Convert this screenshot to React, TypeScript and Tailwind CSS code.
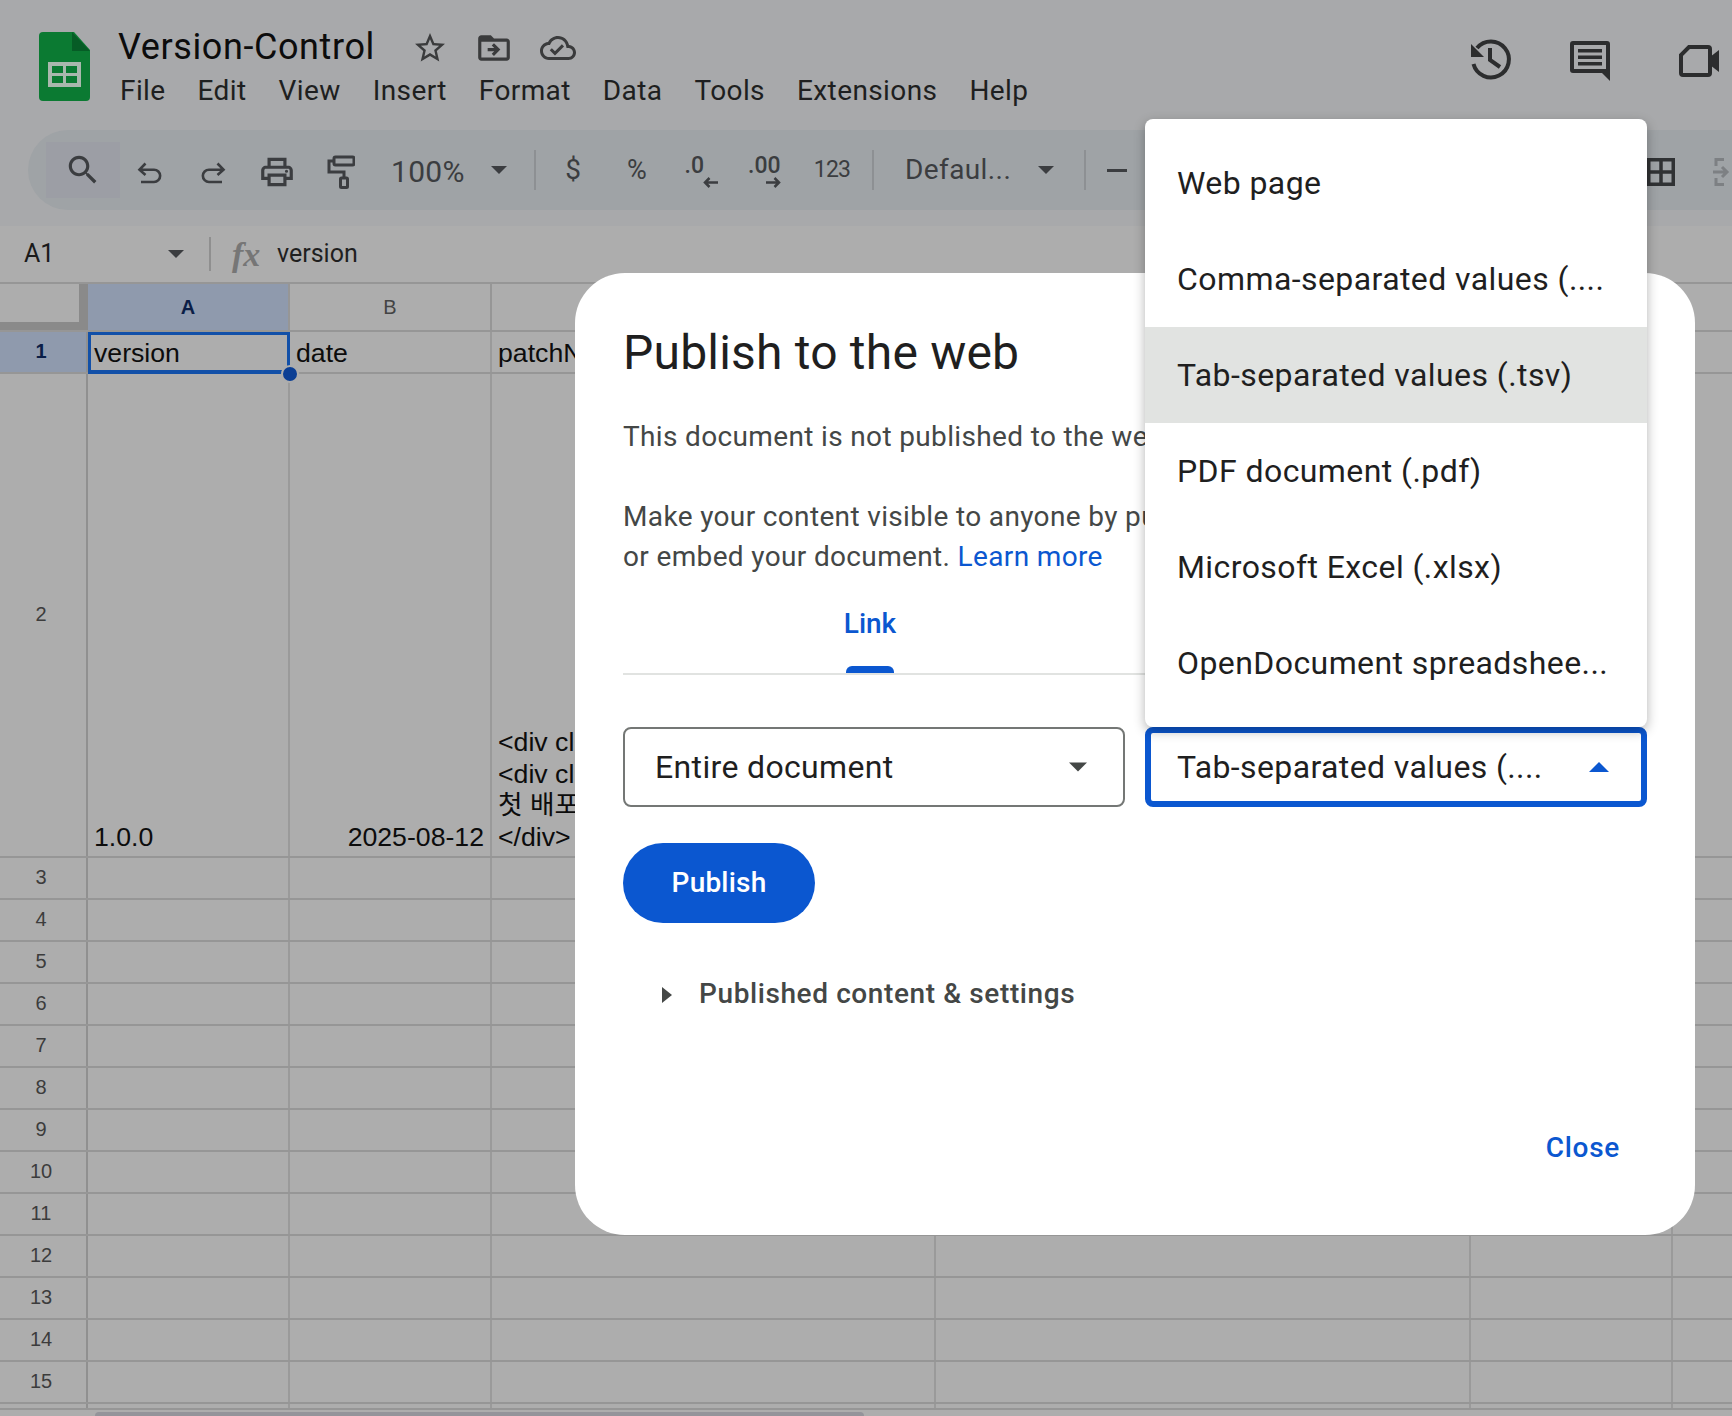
const ui = "font-['Roboto','Noto_Sans',sans-serif]";

function Mi({ d, size = 40, className = "" }: { d: string; size?: number; className?: string }) {
  return (
    <svg width={size} height={size} viewBox="0 0 24 24" fill="currentColor" className={className}>
      <path d={d} />
    </svg>
  );
}

function Caret({ up = false, className = "" }: { up?: boolean; className?: string }) {
  return (
    <svg width="20" height="10" viewBox="0 0 20 10" fill="currentColor" className={className}>
      <path d={up ? "M0 10 10 0 20 10z" : "M0 0h20L10 10z"} />
    </svg>
  );
}

function SheetsLogo() {
  return (
    <svg width="51" height="69" viewBox="0 0 51 69">
      <path d="M4 0h31l16 18v47a4 4 0 0 1-4 4H4a4 4 0 0 1-4-4V4a4 4 0 0 1 4-4z" fill="#0b7a32" />
      <path d="M33 0l18 19H33z" fill="#065c26" />
      <path fill="#a9b8ad" d="M9 30h33v25H9z" />
      <path fill="#0b7a32" d="M13 34h11v7H13zM27 34h11v7H27zM13 44h11v7H13zM27 44h11v7H27z" />
    </svg>
  );
}

const TopMenu = ["File", "Edit", "View", "Insert", "Format", "Data", "Tools", "Extensions", "Help"];

function Header() {
  return (
    <div className="flex h-[130px] bg-[#a8a9ab] pl-[39px] pt-[32px]">
      <SheetsLogo />
      <div className="ml-[28px] flex flex-col">
        <div className="flex h-[32px] items-center">
          <span className="-mt-[2px] text-[36px] leading-[32px] tracking-[0.6px] text-[#0c0c0c]">Version-Control</span>
          <div className="ml-[37px] flex items-center gap-[27px] text-[#3a3b3c]">
            <Mi size={36} d="M22 9.24l-7.19-.62L12 2 9.19 8.63 2 9.24l5.46 4.73L5.82 21 12 17.27 18.18 21l-1.63-7.03L22 9.24zM12 15.4l-3.76 2.27 1-4.28-3.32-2.88 4.38-.38L12 6.1l1.71 4.04 4.38.38-3.32 2.88 1 4.28L12 15.4z" />
            <Mi size={38} d="M20 6h-8l-2-2H4c-1.1 0-1.99.9-1.99 2L2 18c0 1.1.9 2 2 2h16c1.1 0 2-.9 2-2V8c0-1.1-.9-2-2-2zm0 12H4V8h16v10zm-8.01-9l-1.41 1.41L12.16 12H8v2h4.16l-1.59 1.59L11.99 17 16 13.01 11.99 9z" />
            <Mi size={36} d="M19.35 10.04C18.67 6.59 15.64 4 12 4 9.11 4 6.6 5.64 5.35 8.04 2.34 8.36 0 10.91 0 14c0 3.31 2.69 6 6 6h13c2.76 0 5-2.24 5-5 0-2.64-2.05-4.78-4.65-4.96zM19 18H6c-2.21 0-4-1.79-4-4 0-2.05 1.53-3.76 3.56-3.97l1.07-.11.5-.95C8.08 7.14 9.94 6 12 6c2.62 0 4.88 1.86 5.39 4.43l.3 1.5 1.53.11c1.56.1 2.78 1.41 2.78 2.96 0 1.65-1.35 3-3 3zm-9-3.82l-2.09-2.09L6.5 13.5 10 17l6.01-6.01-1.41-1.41z" />
          </div>
        </div>
        <div className="mt-[11px] flex gap-[32px] pl-[2px] text-[28px] leading-[32px] tracking-[0.4px] text-[#1e1f20]">
          {TopMenu.map((m) => (
            <span key={m}>{m}</span>
          ))}
        </div>
      </div>
      <div className="ml-auto mr-[13px] flex items-start text-[#2c2d2e]">
        <svg width="48" height="48" viewBox="0 0 48 48" fill="none" stroke="currentColor" strokeWidth="4" className="mt-[4px]">
          <path d="M6.500 28A18 18 0 1 0 10 12" />
          <path d="M4 8l13 13H4z" fill="currentColor" stroke="none" />
          <path d="M23 12v12l10 7" />
        </svg>
        <svg width="40" height="40" viewBox="0 0 40 40" fill="currentColor" fillRule="evenodd" className="ml-[55px] mt-[9px]">
          <path d="M3 0h34a3 3 0 0 1 3 3v37l-8-8H3a3 3 0 0 1-3-3V3a3 3 0 0 1 3-3zM4 4v24h32V4z" />
          <path d="M8 8h24v3.500H8zM8 14.500h24V18H8zM8 21h24v3.500H8z" />
        </svg>
        <svg width="40" height="32" viewBox="0 0 40 32" className="ml-[69px] mt-[13px]">
          <path d="M10 2h19a2 2 0 0 1 2 2v24a2 2 0 0 1-2 2H4a2 2 0 0 1-2-2V10z" fill="none" stroke="currentColor" strokeWidth="4" />
          <path d="M31 12l9-7v22l-9-7z" fill="currentColor" />
        </svg>
      </div>
    </div>
  );
}

function Divider() {
  return <div className="h-[40px] w-[2px] shrink-0 bg-[#8d9093]" />;
}

function Tool({ w = 64, children }: { w?: number; children: React.ReactNode }) {
  return (
    <div className="flex h-[56px] shrink-0 items-center justify-center" style={{ width: w }}>
      {children}
    </div>
  );
}

function Toolbar() {
  return (
    <div className="bg-[#a8a9ab] pb-[16px] pl-[28px]">
      <div className="flex h-[80px] items-center rounded-l-[40px] bg-[#9fa3a6] pl-[18px] text-[#3b3d40]">
        <div className="-mr-[3px] flex h-[56px] w-[74px] shrink-0 items-center justify-center bg-[#9c9ea5]">
          <Mi size={38} d="M15.5 14h-.79l-.28-.27C15.41 12.59 16 11.11 16 9.5 16 5.91 13.09 3 9.5 3S3 5.91 3 9.5 5.91 16 9.5 16c1.61 0 3.09-.59 4.23-1.57l.27.28v.79l5 4.99L20.49 19l-4.99-5zm-6 0C7.01 14 5 11.99 5 9.5S7.01 5 9.5 5 14 7.01 14 9.5 11.99 14 9.5 14z" />
        </div>
        <Tool>
          <svg width="25" height="22" viewBox="0 0 25 22" fill="none" stroke="currentColor" strokeWidth="2.600" className="mt-[5px]">
            <path d="M8.500 1.500 2.500 7.700 8.500 13M2.500 7.700H17a6 6 0 0 1 0 12.300H4" />
          </svg>
        </Tool>
        <Tool>
          <svg width="25" height="22" viewBox="0 0 25 22" fill="none" stroke="currentColor" strokeWidth="2.600" className="mt-[5px]">
            <path d="M16.500 1.500l6 6.200-6 5.300M22.500 7.700H8a6 6 0 0 0 0 12.300h13" />
          </svg>
        </Tool>
        <Tool>
          <Mi size={38} className="mt-[3px]" d="M19 8h-1V3H6v5H5c-1.660 0-3 1.340-3 3v6h4v4h12v-4h4v-6c0-1.660-1.340-3-3-3zM8 5h8v3H8V5zm8 12v2H8v-4h8v2zm2-2v-2H6v2H4v-4c0-.55.45-1 1-1h14c.55 0 1 .45 1 1v4h-2zm0-4.500a1 1 0 1 1 0 2 1 1 0 0 1 0-2z" />
        </Tool>
        <Tool>
          <svg width="28" height="34" viewBox="0 0 28 34" fill="none" stroke="currentColor" strokeWidth="3" className="mt-[3px]">
            <rect x="7" y="2" width="20" height="8" rx="1.500" />
            <path d="M7 6H2v11h15v6" />
            <rect x="13.500" y="23" width="7" height="9.500" rx="1" />
          </svg>
        </Tool>
        <span className="ml-[18px] mt-[2px] w-[76px] text-[30px] tracking-[0.3px]">100%</span>
        <Caret className="ml-[24px] w-[16px]" />
        <div className="ml-[27px]"><Divider /></div>
        <Tool w={74}><span className="text-[28px]">$</span></Tool>
        <Tool w={54}><span className="text-[27px]">%</span></Tool>
        <Tool w={74}>
          <div className="mt-[4px] flex w-[33px] flex-col">
            <span className="text-[23px] font-medium leading-[20px]">.0</span>
            <svg width="15" height="11" viewBox="0 0 15 11" fill="none" stroke="currentColor" strokeWidth="2.500" className="ml-[18px] mt-[1px]">
              <path d="M15 5.500H2M6.500 1 2 5.500 6.500 10" />
            </svg>
          </div>
        </Tool>
        <Tool w={54}>
          <div className="mt-[4px] flex w-[34px] flex-col">
            <span className="text-[23px] font-medium leading-[20px]">.00</span>
            <svg width="15" height="11" viewBox="0 0 15 11" fill="none" stroke="currentColor" strokeWidth="2.500" className="ml-[18px] mt-[1px]">
              <path d="M0 5.500h13M8.500 1 13 5.500 8.500 10" />
            </svg>
          </div>
        </Tool>
        <Tool w={80}><span className="text-[23px] tracking-[-0.8px]">123</span></Tool>
        <Divider />
        <span className="ml-[31px] w-[106px] whitespace-nowrap text-[28px] tracking-[0.4px]">Defaul...</span>
        <Caret className="ml-[27px] w-[16px]" />
        <div className="ml-[30px]"><Divider /></div>
        <div className="ml-[21px] h-[3px] w-[20px] bg-[#3b3d40]" />
        <div className="-mr-[11px] ml-auto flex items-center">
          <svg width="28" height="28" viewBox="0 0 28 28" fill="none" stroke="#303234" strokeWidth="3.500" className="mt-[3px]">
            <path d="M1.750 1.750h24.500v24.500H1.750zM14 1.750v24.500M1.750 14h24.500" />
          </svg>
          <svg width="30" height="28" viewBox="0 0 30 28" fill="none" stroke="#7d8083" strokeWidth="3" className="ml-[38px] mt-[3px]">
            <path d="M11 1.500H3V8M3 20v6.500h8M0 14h13M9 9l5 5-5 5" />
          </svg>
        </div>
      </div>
    </div>
  );
}

function FormulaBar() {
  return (
    <div className="flex h-[56px] items-center bg-[#adadad] pl-[24px]">
      <span className="w-[144px] text-[25px] text-[#1a1a1a]">A1</span>
      <Caret className="w-[16px] text-[#3b3d40]" />
      <div className="ml-[25px] h-[34px] w-[2px] bg-[#8f8f8f]" />
      <span className="ml-[21px] w-[45px] font-['Liberation_Serif',serif] text-[34px] font-bold italic text-[#767676]">fx</span>
      <span className="text-[25px] text-[#1f1f1f]">version</span>
    </div>
  );
}

const cols = ["w-[202px]", "w-[202px]", "w-[444px]", "w-[535px]", "w-[202px]", "flex-1"];

function ColumnHeader() {
  return (
    <div className="flex h-[50px] border-t-2 border-b-2 border-[#969696] font-['Liberation_Sans',sans-serif] text-[20px] text-[#444]">
      <div className="w-[88px] shrink-0">
        <div className="box-content h-[38px] w-[79px] border-r-[9px] border-b-[8px] border-[#8a8a8a]" />
      </div>
      <div className="flex w-[202px] items-center justify-center border-r-2 border-[#969696] bg-[#8f9aad] font-bold text-[#0b1e47]">A</div>
      <div className="flex w-[202px] items-center justify-center border-r-2 border-[#969696]">B</div>
      <div className="w-[444px] border-r-2 border-[#969696]" />
      <div className="w-[535px] border-r-2 border-[#969696]" />
      <div className="w-[202px] border-r-2 border-[#969696]" />
      <div className="flex-1" />
    </div>
  );
}

function Row({ n, h, selected, children }: { n?: number; h: number; selected?: boolean; children?: React.ReactNode[] }) {
  return (
    <div className="flex border-b-2 border-[#969696]" style={{ height: h }}>
      <div
        className={`flex w-[88px] shrink-0 items-center justify-center border-r-2 border-[#909090] pb-[2px] pr-[4px] text-[20px] ${
          selected ? "bg-[#8f9aad] font-bold text-[#0b1e47]" : "text-[#3c3c3c]"
        }`}
      >
        {n}
      </div>
      {cols.map((c, i) => (
        <div key={c + i} className={`${c} border-r-2 border-[#9a9a9a] last:border-r-0`}>
          {children?.[i]}
        </div>
      ))}
    </div>
  );
}

function Sheet() {
  const rest = [3, 4, 5, 6, 7, 8, 9, 10, 11, 12, 13, 14, 15];
  return (
    <div className="relative flex-1 overflow-hidden bg-[#adadad] font-['Liberation_Sans','Noto_Sans_CJK_KR',sans-serif] text-[26.67px] text-[#0c0c0c]">
      <ColumnHeader />
      <Row
        n={1}
        h={42}
        selected
        children={[
          <div key="a" className="relative z-10 h-[42px] w-[202px] border-[3px] border-b-[4px] border-[#1250a8] pl-[3px] leading-[36px]">version</div>,
          <div key="b" className="pl-[6px] leading-[42px]">date</div>,
          <div key="c" className="pl-[6px] leading-[42px]">patchNotes</div>,
        ]}
      />
      <Row
        n={2}
        h={484}
        children={[
          <div key="a" className="flex h-full items-end pb-[3px] pl-[6px] leading-[32px]">1.0.0</div>,
          <div key="b" className="flex h-full items-end justify-end pb-[3px] pr-[6px] leading-[32px]">2025-08-12</div>,
          <div key="c" className="flex h-full flex-col justify-end pb-[3px] pl-[6px] leading-[31.500px]">
            <div>&lt;div cl</div>
            <div>&lt;div cl</div>
            <div>첫 배포</div>
            <div>&lt;/div&gt;</div>
          </div>,
        ]}
      />
      {rest.map((n) => (
        <Row key={n} n={n} h={42} />
      ))}
      <Row h={42} />
      <div className="absolute left-[281px] top-[83px] z-20 h-[18px] w-[18px] rounded-full border-2 border-[#adadad] bg-[#0b3e94]" />
      <div className="absolute inset-x-0 bottom-0 h-[8px] border-t-2 border-[#969696] bg-[#adadad]">
        <div className="ml-[95px] mt-[2px] h-[4px] w-[769px] rounded-t-[4px] bg-[#94949a]" />
      </div>
    </div>
  );
}

const formats = [
  "Web page",
  "Comma-separated values (....",
  "Tab-separated values (.tsv)",
  "PDF document (.pdf)",
  "Microsoft Excel (.xlsx)",
  "OpenDocument spreadshee...",
];

function FormatMenu() {
  return (
    <div className="absolute left-[1145px] top-[119px] w-[502px] rounded-[8px] bg-white py-[16px] shadow-[0_4px_12px_rgba(0,0,0,0.3)]">
      {formats.map((f) => (
        <div
          key={f}
          className={`flex h-[96px] items-center pl-[32px] text-[32px] tracking-[0.42px] text-[#1f1f1f] ${
            f.startsWith("Tab") ? "bg-[#e1e3e1]" : ""
          }`}
        >
          {f}
        </div>
      ))}
    </div>
  );
}

function PublishDialog() {
  return (
    <div className="absolute left-[575px] top-[273px] flex h-[962px] w-[1120px] flex-col rounded-[50px] bg-white pl-[48px] pr-[48px] pt-[41px]">
      <h1 className="text-[48px] leading-[78px] tracking-[0.2px] text-[#1f1f1f]">Publish to the web</h1>
      <p className="mt-[25px] text-[28px] leading-[40px] tracking-[0.35px] text-[#444746]">This document is not published to the web.</p>
      <p className="mt-[40px] text-[28px] leading-[40px] tracking-[0.35px] text-[#444746]">
        Make your content visible to anyone by publishing it. You'll get a link to share
        <br />
        or embed your document. <span className="text-[#0b57d0]">Learn more</span>
      </p>
      <div className="flex h-[98px] border-b-2 border-[#e1e3e1]">
        <div className="relative flex h-full w-[494px] justify-center pt-[27px] text-[28px] font-medium leading-[40px] text-[#0b57d0]">
          Link
          <div className="absolute bottom-0 left-[223px] h-[7px] w-[48px] rounded-t-[6px] bg-[#0b57d0]" />
        </div>
      </div>
      <div className="mt-[52px] flex gap-[20px]">
        <div className="flex h-[80px] w-[502px] items-center justify-between rounded-[8px] border-2 border-[#747775] pl-[30px] pr-[36px] text-[32px] tracking-[0.35px] text-[#1f1f1f]">
          Entire document
          <Caret className="w-[18px] text-[#444746]" />
        </div>
        <div className="flex h-[80px] w-[502px] items-center justify-between rounded-[8px] border-[6px] border-[#0b57d0] pl-[26px] pr-[32px] text-[32px] tracking-[0.38px] text-[#1f1f1f]">
          Tab-separated values (....
          <Caret up className="text-[#0b57d0]" />
        </div>
      </div>
      <button className="mt-[36px] flex h-[80px] w-[192px] items-center justify-center rounded-[40px] bg-[#0b57d0] text-[28px] font-medium tracking-[0.2px] text-white">
        Publish
      </button>
      <div className="mt-[51px] flex h-[40px] items-center pl-[39px] text-[28px] font-medium tracking-[0.6px] text-[#444746]">
        <svg width="10" height="16" viewBox="0 0 10 16" fill="currentColor" className="mr-[27px] mt-[2px]">
          <path d="M0 0l10 8-10 8z" />
        </svg>
        Published content &amp; settings
      </div>
      <div className="mt-auto flex justify-end pb-[67px] pr-[27px] text-[28px] font-medium leading-[40px] tracking-[0.7px] text-[#0b57d0]">Close</div>
    </div>
  );
}

export default function App() {
  return (
    <div className={`relative flex h-[1416px] w-[1732px] flex-col overflow-hidden bg-[#adadad] ${ui}`}>
      <Header />
      <Toolbar />
      <FormulaBar />
      <Sheet />
      <PublishDialog />
      <FormatMenu />
    </div>
  );
}
